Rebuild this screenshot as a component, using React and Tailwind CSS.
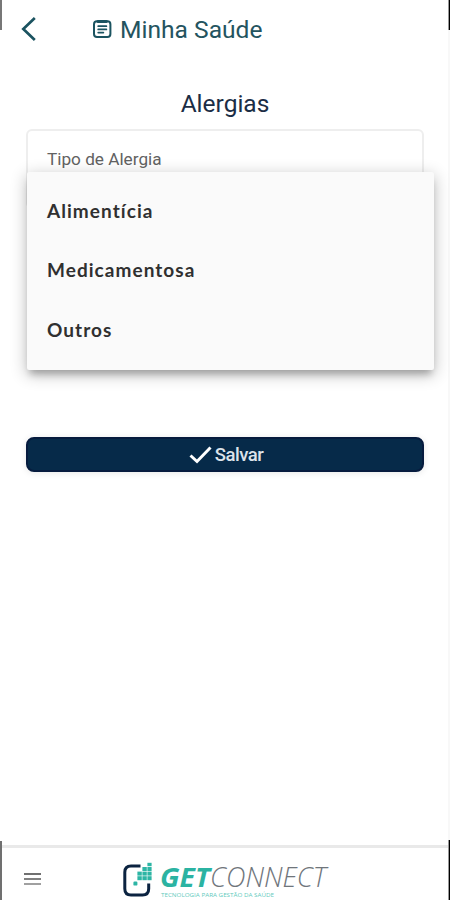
import { useState } from "react";

const allergyTypes = [
  { value: "food", label: "Alimentícia" },
  { value: "drug", label: "Medicamentosa" },
  { value: "other", label: "Outros" },
];

function ClipboardIcon() {
  return (
    <svg
      className="w-[19px] h-[20px] -mt-0.5"
      viewBox="0 0 19 20"
      fill="none"
      stroke="#1b5360"
      strokeWidth="2"
      strokeLinecap="round"
    >
      <rect x="1" y="2.2" width="16.4" height="15.8" rx="3" />
      <path d="M5 2.4 H13.4" strokeWidth="3" />
      <path d="M5.2 7.2 H13.4 M5.2 10.4 H13.4 M5.2 13.6 H10.4" strokeWidth="1.7" />
    </svg>
  );
}

function LogoMark() {
  return (
    <svg className="w-[30px] h-[36px]" viewBox="0 0 30 36" fill="none">
      <path
        d="M17.5 4 H8 Q1.8 4 1.8 10.2 V26.8 Q1.8 33 8 33 H19.5 Q25.7 33 25.7 26.8 V21.5"
        stroke="#0b2340"
        strokeWidth="3"
      />
      <g fill="#2db5a5">
        <rect x="24.4" y="0.8" width="4.2" height="3.4" />
        <rect x="19.4" y="5" width="4.4" height="4" />
        <rect x="24.4" y="5" width="4.2" height="4" />
        <rect x="14.4" y="9.6" width="4.4" height="4" />
        <rect x="19.4" y="9.6" width="4.4" height="4" />
        <rect x="24.4" y="9.6" width="4.2" height="4" />
        <rect x="14.4" y="14.2" width="4.4" height="4" />
        <rect x="19.4" y="14.2" width="4.4" height="4" />
        <rect x="24.4" y="14.2" width="4.2" height="4" />
        <rect x="10.4" y="19.6" width="4" height="4" rx="1.2" />
      </g>
    </svg>
  );
}

function Logo() {
  return (
    <div className="flex">
      <LogoMark />
      <div className="ml-[6px]">
        <svg
          className="block w-[172px] h-[28px] overflow-visible"
          viewBox="0 0 172 28"
          fontFamily="'Open Sans', sans-serif"
          fontSize="27"
          fontStyle="italic"
        >
          <text
            x="1"
            y="25"
            fontWeight="700"
            fill="#2bb3a2"
            textLength="50"
            lengthAdjust="spacingAndGlyphs"
          >
            GET
          </text>
          <text
            x="51"
            y="25"
            fontWeight="300"
            fill="#6f757b"
            textLength="116"
            lengthAdjust="spacingAndGlyphs"
          >
            CONNECT
          </text>
        </svg>
        <svg
          className="block w-[172px] h-[8px]"
          viewBox="0 0 172 8"
          fontFamily="'Open Sans', sans-serif"
        >
          <text
            x="2"
            y="6.8"
            fontSize="6"
            fill="#5fcabd"
            textLength="113"
            lengthAdjust="spacingAndGlyphs"
          >
            TECNOLOGIA PARA GESTÃO DA SAÚDE
          </text>
        </svg>
      </div>
    </div>
  );
}

export default function App() {
  const [open, setOpen] = useState(true);
  const [selected, setSelected] = useState(null);

  const handleSelect = (type) => {
    setSelected(type);
    setOpen(false);
  };

  return (
    <div className="flex w-[450px] h-[900px] bg-white overflow-hidden font-[Roboto,sans-serif]">
      {/* Left edge */}
      <div className="w-[2px] flex flex-col justify-between">
        <div className="h-[30px] bg-[#777777]" />
        <div className="h-[59px] bg-[#707070]" />
      </div>

      <div className="flex-1 flex flex-col">
        {/* Header */}
        <header className="h-[60px] flex items-center pl-[19px]">
          <button className="w-4 h-[60px] flex items-center">
            <svg
              className="w-4 h-[26px] -mt-0.5"
              viewBox="0 0 16 26"
              fill="none"
              stroke="#1b5360"
              strokeWidth="2.7"
            >
              <path d="M13.8 2 L2.3 13 L13.8 24" />
            </svg>
          </button>
          <div className="flex items-center ml-[56px]">
            <ClipboardIcon />
            <h1 className="ml-2 text-[24.6px] leading-8 text-[#24545f] whitespace-nowrap">
              Minha Saúde
            </h1>
          </div>
        </header>

        {/* Form */}
        <main className="flex-1 px-[24px] pt-7">
          <h2 className="text-center text-[24.5px] leading-8 text-[#1b2d45]">
            Alergias
          </h2>

          <div className="relative mt-[9px] h-[308px]">
            <button
              onClick={() => setOpen(!open)}
              className="w-[398px] h-[80px] flex items-start rounded-md border-2 border-[#eeeeee] pl-[19px] pt-[17px] text-[17.2px] leading-[22px] text-[#626262]"
            >
              {selected ? selected.label : "Tipo de Alergia"}
            </button>
            {open && (
              <ul className="absolute left-[1px] top-[43px] w-[407px] h-[198px] pt-[9px] bg-[#fafafa] rounded-[2px] shadow-[0_7px_7px_-3px_rgba(0,0,0,0.24),0_4px_16px_1px_rgba(0,0,0,0.24)]">
                {allergyTypes.map((type) => (
                  <li
                    key={type.value}
                    onClick={() => handleSelect(type)}
                    className="h-[59.5px] flex items-center pl-5 font-[Lato,sans-serif] font-bold text-[19px] tracking-[1.05px] text-[#303030]"
                  >
                    {type.label}
                  </li>
                ))}
              </ul>
            )}
          </div>

          <button className="w-[398px] h-[35px] flex items-center justify-center gap-[3px] rounded-lg border-2 border-[#061b3e] bg-[#062a49] pl-0.5 text-[18.5px] font-medium tracking-[-0.5px] text-[#dce3ea] shadow-[0_1px_7px_rgba(0,0,0,0.1)]">
            <svg
              className="w-[23px] h-5"
              viewBox="0 0 23 20"
              fill="none"
              stroke="white"
              strokeWidth="3"
            >
              <path d="M1.5 10.5 L8 16.5 L21.5 2.5" />
            </svg>
            <span className="pt-0.5">Salvar</span>
          </button>
        </main>

        {/* Footer */}
        <footer className="h-[55px] flex items-start border-t-[3px] border-[#e9e9e9] pl-[22px]">
          <button className="w-[17px] pt-[25px] flex flex-col gap-[3px]">
            <span className="w-full h-[2px] bg-[#707070]" />
            <span className="w-full h-[2px] bg-[#808080]" />
            <span className="w-full h-[2px] bg-[#a0a0a0]" />
          </button>
          <div className="ml-[82px] pt-[14px]">
            <Logo />
          </div>
        </footer>
      </div>

      {/* Right edge */}
      <div className="w-[2px] flex flex-col bg-[#f8f8f8] justify-between">
        <div className="h-[30px] bg-black border-l border-[#999999]" />
        <div className="h-[60px] bg-black border-l border-[#999999]" />
      </div>
    </div>
  );
}
